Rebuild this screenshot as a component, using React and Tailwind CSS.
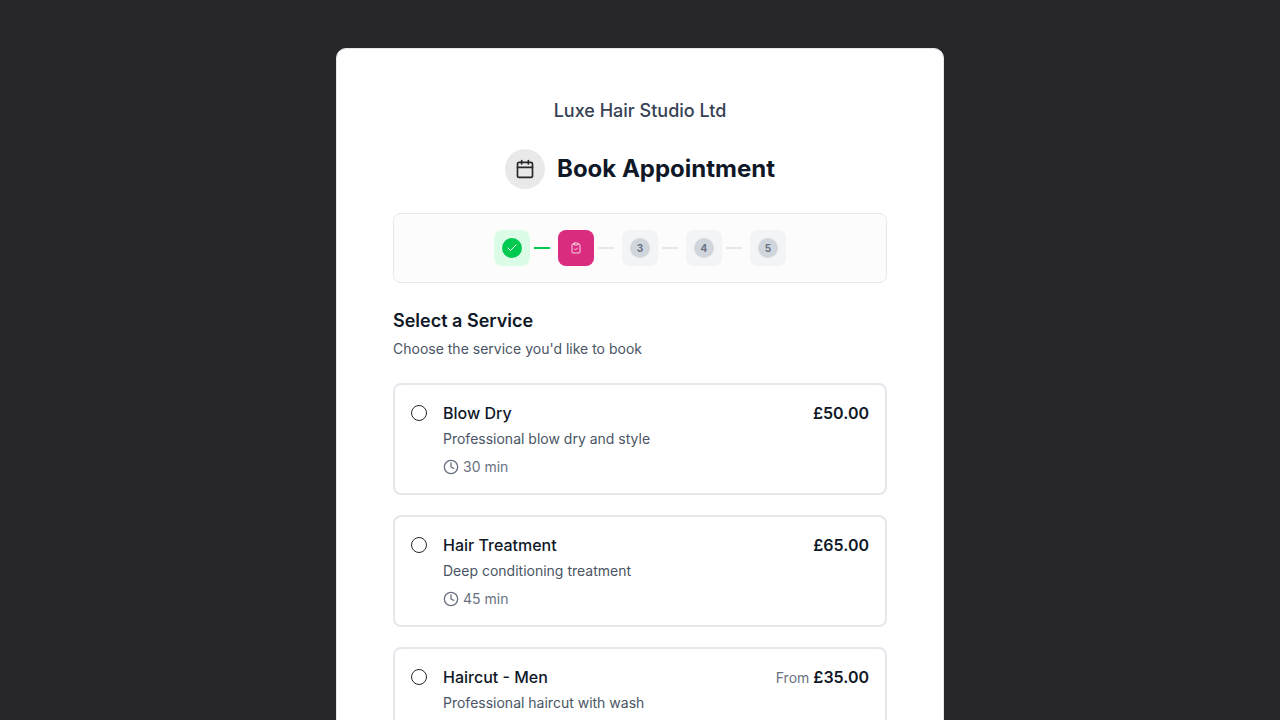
import React, { useState } from "react";
import { Calendar, Check, ClipboardCheck, Clock } from "lucide-react";

const steps = [
  { id: 1, label: "Location", status: "done" },
  { id: 2, label: "Service", status: "current" },
  { id: 3, label: "Staff", status: "upcoming" },
  { id: 4, label: "Date and time", status: "upcoming" },
  { id: 5, label: "Confirm", status: "upcoming" },
];

const services = [
  {
    id: "blow-dry",
    name: "Blow Dry",
    description: "Professional blow dry and style",
    duration: 30,
    price: 50,
  },
  {
    id: "hair-treatment",
    name: "Hair Treatment",
    description: "Deep conditioning treatment",
    duration: 45,
    price: 65,
  },
  {
    id: "haircut-men",
    name: "Haircut - Men",
    description: "Professional haircut with wash",
    duration: 30,
    price: 35,
    from: true,
  },
];

const formatPrice = (value) => `£${value.toFixed(2)}`;

function StepBadge({ step }) {
  if (step.status === "done") {
    return (
      <div className="flex h-9 w-9 items-center justify-center rounded-lg bg-green-100">
        <div className="flex h-5 w-5 items-center justify-center rounded-full bg-[#00c950] text-white">
          <Check className="h-3 w-3" />
        </div>
      </div>
    );
  }

  if (step.status === "current") {
    return (
      <div className="flex h-9 w-9 items-center justify-center rounded-lg bg-[#d92b80] text-white/80">
        <ClipboardCheck className="h-3 w-3" />
      </div>
    );
  }

  return (
    <div className="flex h-9 w-9 items-center justify-center rounded-lg bg-gray-100">
      <div className="flex h-5 w-5 items-center justify-center rounded-full bg-gray-300 text-[10px] font-bold text-gray-500">
        {step.id}
      </div>
    </div>
  );
}

function ServiceCard({ service, selected, onSelect }) {
  return (
    <label
      htmlFor={service.id}
      className="flex cursor-pointer items-start gap-4 rounded-lg border-2 border-gray-200 bg-white p-4"
    >
      <input
        id={service.id}
        type="radio"
        name="service"
        checked={selected}
        onChange={() => onSelect(service.id)}
        className="mt-1 h-4 w-4 shrink-0 appearance-none rounded-full border border-[#27272a] checked:border-4"
      />
      <div className="flex-1">
        <div className="flex items-center justify-between">
          <h3 className="text-base font-medium text-gray-900">{service.name}</h3>
          <div className="flex items-baseline gap-1">
            {service.from && <span className="text-sm text-gray-500">From</span>}
            <span className="text-base font-semibold text-gray-900">
              {formatPrice(service.price)}
            </span>
          </div>
        </div>
        <p className="mt-1 text-sm text-gray-600">{service.description}</p>
        <div className="mt-2 flex items-center gap-1 text-sm text-gray-500">
          <Clock className="h-4 w-4" />
          <span>{service.duration} min</span>
        </div>
      </div>
    </label>
  );
}

function App() {
  const [selectedService, setSelectedService] = useState(null);

  return (
    <div className="min-h-screen bg-[#27272a] px-4 py-12 font-['Inter',sans-serif]">
      <main className="mx-auto max-w-[608px] rounded-[10px] border border-gray-200 bg-white px-14 py-12">
        {/* Header */}
        <p className="text-center text-lg font-medium text-gray-700">
          Luxe Hair Studio Ltd
        </p>
        <div className="mt-6 flex items-center justify-center gap-3">
          <div className="flex h-10 w-10 items-center justify-center rounded-full bg-[#e9e9ea] text-[#27272a]">
            <Calendar className="h-5 w-5" />
          </div>
          <h1 className="text-2xl font-bold text-gray-900">Book Appointment</h1>
        </div>

        {/* Progress */}
        <ol className="mt-6 flex items-center justify-center gap-2 rounded-lg border border-gray-200 bg-[#fcfcfc] p-4">
          {steps.map((step, index) => (
            <li key={step.id} className="flex items-center gap-1" aria-label={step.label}>
              <StepBadge step={step} />
              {index < steps.length - 1 && (
                <div
                  className={
                    step.status === "done"
                      ? "h-0.5 w-4 bg-[#00c950]"
                      : "h-0.5 w-4 bg-gray-200"
                  }
                />
              )}
            </li>
          ))}
        </ol>

        {/* Services */}
        <section className="mt-6">
          <h2 className="text-lg font-semibold text-gray-900">Select a Service</h2>
          <p className="mt-1 text-sm text-gray-600">
            Choose the service you'd like to book
          </p>
          <div className="mt-6 flex flex-col gap-5">
            {services.map((service) => (
              <ServiceCard
                key={service.id}
                service={service}
                selected={selectedService === service.id}
                onSelect={setSelectedService}
              />
            ))}
          </div>
        </section>
      </main>
    </div>
  );
}

export default App;
